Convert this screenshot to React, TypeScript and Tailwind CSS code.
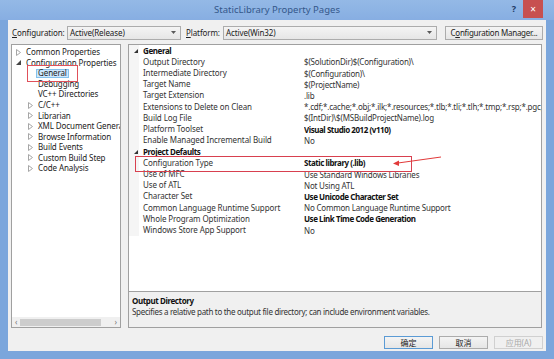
import React from "react";

type GridRow =
  | { cat: string }
  | { name: string; value: string; bold?: boolean };

const gridRows: GridRow[] = [
  { cat: "General" },
  { name: "Output Directory", value: "$(SolutionDir)$(Configuration)\\" },
  { name: "Intermediate Directory", value: "$(Configuration)\\" },
  { name: "Target Name", value: "$(ProjectName)" },
  { name: "Target Extension", value: ".lib" },
  {
    name: "Extensions to Delete on Clean",
    value:
      "*.cdf;*.cache;*.obj;*.ilk;*.resources;*.tlb;*.tli;*.tlh;*.tmp;*.rsp;*.pgc;*.pgd;*.meta;*.tlog;*.manifest;*.res;*.pch;*.exp;*.idb",
  },
  { name: "Build Log File", value: "$(IntDir)\\$(MSBuildProjectName).log" },
  { name: "Platform Toolset", value: "Visual Studio 2012 (v110)", bold: true },
  { name: "Enable Managed Incremental Build", value: "No" },
  { cat: "Project Defaults" },
  { name: "Configuration Type", value: "Static library (.lib)", bold: true },
  { name: "Use of MFC", value: "Use Standard Windows Libraries" },
  { name: "Use of ATL", value: "Not Using ATL" },
  { name: "Character Set", value: "Use Unicode Character Set", bold: true },
  { name: "Common Language Runtime Support", value: "No Common Language Runtime Support" },
  { name: "Whole Program Optimization", value: "Use Link Time Code Generation", bold: true },
  { name: "Windows Store App Support", value: "No" },
];

type TreeItem = { label: string; level: number; exp?: "open" | "closed"; selected?: boolean };

const treeItems: TreeItem[] = [
  { label: "Common Properties", level: 0, exp: "closed" },
  { label: "Configuration Properties", level: 0, exp: "open" },
  { label: "General", level: 1, selected: true },
  { label: "Debugging", level: 1 },
  { label: "VC++ Directories", level: 1 },
  { label: "C/C++", level: 1, exp: "closed" },
  { label: "Librarian", level: 1, exp: "closed" },
  { label: "XML Document Generator", level: 1, exp: "closed" },
  { label: "Browse Information", level: 1, exp: "closed" },
  { label: "Build Events", level: 1, exp: "closed" },
  { label: "Custom Build Step", level: 1, exp: "closed" },
  { label: "Code Analysis", level: 1, exp: "closed" },
];

function Expander({ kind }: { kind?: "open" | "closed" }) {
  if (kind === "closed")
    return (
      <svg width="5" height="7" viewBox="0 0 5 7">
        <path d="M0.5 0.5 L4.5 3.5 L0.5 6.5 Z" fill="none" stroke="#a6a6a6" strokeWidth="1" />
      </svg>
    );
  if (kind === "open")
    return (
      <svg width="5" height="5" viewBox="0 0 5 5">
        <path d="M5 0 L5 5 L0 5 Z" fill="#444" />
      </svg>
    );
  return null;
}

function Combo({ text, w }: { text: string; w: string }) {
  return (
    <div
      className={`${w} shrink-0 h-[14px] flex items-center border border-[#acacac] bg-gradient-to-b from-[#f4f4f4] to-[#e6e6e6] pl-[2px] pr-[4px]`}
    >
      <span className="flex-1 text-[#222]">{text}</span>
      <svg width="5" height="3" viewBox="0 0 5 3">
        <path d="M0 0 L5 0 L2.5 3 Z" fill="#5a5a5a" />
      </svg>
    </div>
  );
}

export default function App() {
  return (
    <div className="relative w-[554px] h-[359px] bg-[#7ba6dc] flex flex-col overflow-hidden font-['Noto_Sans','Noto_Sans_CJK_SC',sans-serif] text-[8px] tracking-[-0.1px] leading-none">
      {/* Title bar */}
      <div className="relative h-[20px] flex items-center justify-center bg-gradient-to-b from-[#94b9e6] to-[#87aee2]">
        <span className="text-[9.5px] tracking-normal text-[#34578a]">StaticLibrary Property Pages</span>
        <div className="absolute right-[11px] top-0 flex items-start">
          <span className="mt-[4px] mr-[7px] text-[9px] font-bold text-[#1d3a66]">?</span>
          <div className="w-[20px] h-[18px] bg-[#c75050] flex items-center justify-center text-white text-[10px]">
            ×
          </div>
        </div>
      </div>

      {/* Client area */}
      <div className="mx-[8px] mb-[8px] flex-1 bg-[#f0f0f0] flex flex-col">
        {/* Configuration row */}
        <div className="mt-[5px] h-[15px] flex items-center pl-[4px] whitespace-nowrap">
          <span className="w-[55px] shrink-0 text-[#222]">
            <span className="underline">C</span>onfiguration:
          </span>
          <Combo text="Active(Release)" w="w-[114px]" />
          <span className="ml-[5px] w-[37px] shrink-0 text-[#222]">
            <span className="underline">P</span>latform:
          </span>
          <Combo text="Active(Win32)" w="w-[214px]" />
          <div className="ml-[8px] w-[98px] shrink-0 h-[14px] flex items-center justify-center border border-[#acacac] bg-gradient-to-b from-[#f4f4f4] to-[#e6e6e6] text-[#222] tracking-[-0.25px]">
            C<span className="underline">o</span>nfiguration Manager...
          </div>
        </div>

        {/* Panels */}
        <div className="mt-[4px] h-[284px] flex pl-[3px] gap-[7px]">
          {/* Tree */}
          <div className="w-[110px] shrink-0 h-full bg-white border border-[#a0a0a0] flex flex-col overflow-hidden">
            <div className="flex-1 pt-[2px] overflow-hidden">
              {treeItems.map((it) => (
                <div
                  key={it.label}
                  className={`h-[10.55px] flex items-center whitespace-nowrap ${
                    it.level === 0 ? "pl-[4px]" : "pl-[16px]"
                  }`}
                >
                  <span className="w-[10px] shrink-0 flex items-center">
                    <Expander kind={it.exp} />
                  </span>
                  {it.selected ? (
                    <span className="-ml-[2px] px-[1px] h-[9px] flex items-center bg-[#cce8ff] border border-[#84c1ec] text-[#222]">
                      {it.label}
                    </span>
                  ) : (
                    <span className="shrink-0 text-[#222]">{it.label}</span>
                  )}
                </div>
              ))}
            </div>
            {/* horizontal scrollbar */}
            <div className="h-[10px] shrink-0 flex items-center bg-[#f0f0f0] px-[3px]">
              <span className="text-[8px] text-[#777]">‹</span>
              <div className="ml-[3px] w-[81px] h-[7px] bg-[#cdcdcd]" />
              <div className="flex-1" />
              <span className="text-[8px] text-[#777]">›</span>
            </div>
          </div>

          {/* Property grid + description */}
          <div className="w-[414px] shrink-0 h-full flex flex-col">
            <div className="h-[248px] bg-white border border-[#a0a0a0] overflow-hidden">
              {gridRows.map((r, i) =>
                "cat" in r ? (
                  <div key={i} className="h-[11.23px] flex items-center">
                    <span className="w-[10px] shrink-0 h-full bg-[#f5f5f5] flex items-center justify-end pr-[1px]">
                      <svg width="4" height="4" viewBox="0 0 4 4">
                        <path d="M4 0 L4 4 L0 4 Z" fill="#333" />
                      </svg>
                    </span>
                    <span className="pl-[4px] font-bold tracking-[-0.4px] text-[#111]">{r.cat}</span>
                  </div>
                ) : (
                  <div key={i} className="h-[11.23px] flex items-center">
                    <span className="w-[10px] shrink-0 h-full bg-[#f5f5f5]" />
                    <span className="w-[165px] shrink-0 pl-[4px] whitespace-nowrap text-[#333]">{r.name}</span>
                    <span
                      className={`flex-1 min-w-0 leading-[11px] whitespace-nowrap overflow-hidden ${
                        r.bold ? "font-bold tracking-[-0.45px] text-[#111]" : "tracking-[-0.2px] text-[#333]"
                      }`}
                    >
                      {r.value}
                    </span>
                  </div>
                )
              )}
            </div>
            <div className="flex-1 border border-t-0 border-[#a0a0a0] bg-[#f0f0f0] pl-[3px] pt-[3px]">
              <div className="h-[11px] flex items-center font-bold tracking-[-0.4px] text-[#111]">Output Directory</div>
              <div className="h-[11px] flex items-center tracking-[-0.3px] text-[#333]">
                Specifies a relative path to the output file directory; can include environment variables.
              </div>
            </div>
          </div>
        </div>

        {/* Dialog buttons */}
        <div className="mt-[8px] h-[13px] flex justify-end gap-[6px] pr-[3px]">
          <div className="w-[49px] h-[13px] flex items-center justify-center border border-[#5b9bd5] bg-gradient-to-b from-[#f4f4f4] to-[#e6e6e6] text-[#222]">
            确定
          </div>
          <div className="w-[49px] h-[13px] flex items-center justify-center border border-[#acacac] bg-gradient-to-b from-[#f4f4f4] to-[#e6e6e6] text-[#222]">
            取消
          </div>
          <div className="w-[49px] h-[13px] flex items-center justify-center border border-[#d0d0d0] bg-[#f0f0f0] text-[#a8a8a8]">
            应用(A)
          </div>
        </div>
      </div>

      {/* Red annotations */}
      <svg className="absolute left-0 top-0 pointer-events-none" width="554" height="359" viewBox="0 0 554 359">
        <rect x="27.5" y="65.5" width="50" height="16" fill="none" stroke="#e0505a" strokeWidth="1" />
        <rect x="135.5" y="156.5" width="276" height="15" fill="none" stroke="#d8404f" strokeWidth="1" />
        <line x1="441" y1="157" x2="398" y2="163" stroke="#e23a3a" strokeWidth="1" />
        <path d="M393 163.5 L399 160.5 L399 166 Z" fill="#e23a3a" />
      </svg>
    </div>
  );
}
